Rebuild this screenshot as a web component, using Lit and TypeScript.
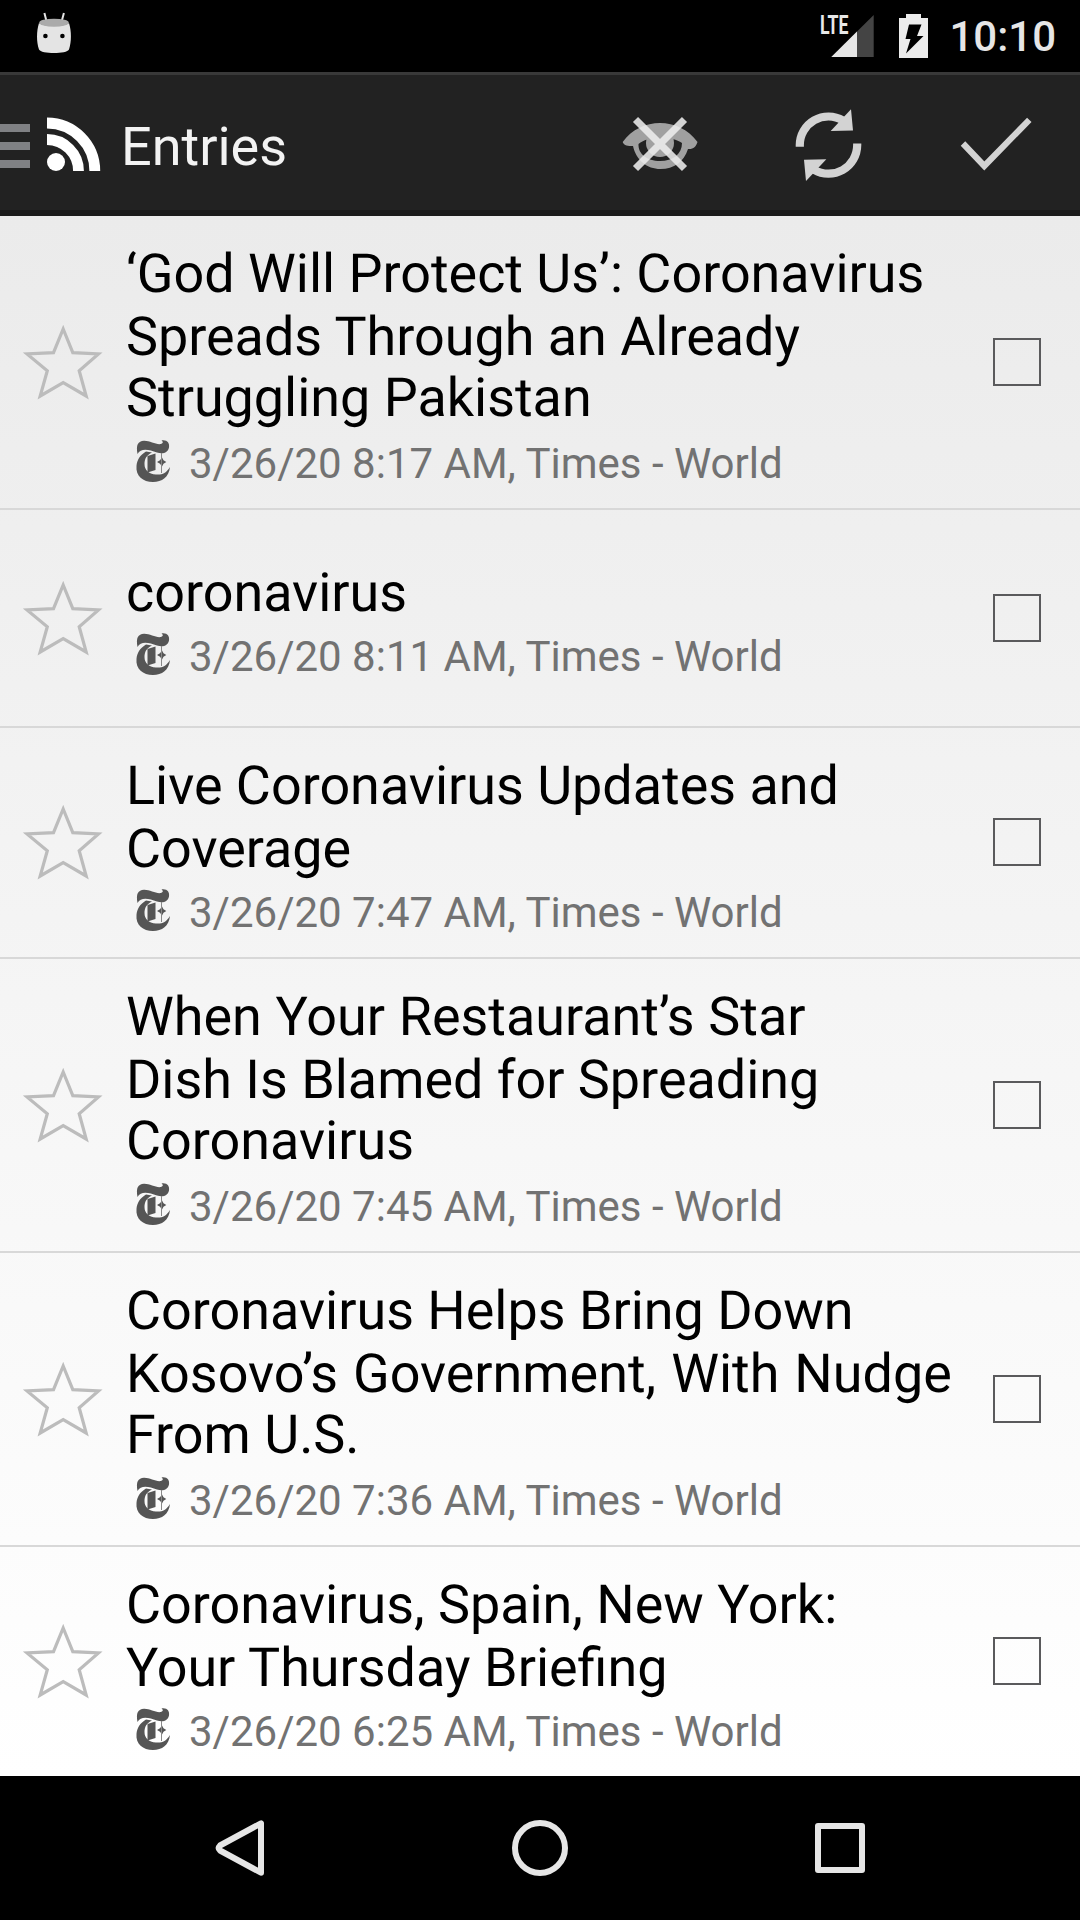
import { LitElement, html, css, svg } from "lit";
import { customElement, property } from "lit/decorators.js";
import { styleMap } from "lit/directives/style-map.js";

interface Line { text: string; gap?: number; }
interface Entry { lines: Line[]; time: string; }

const ENTRIES: Entry[] = [
  { lines: [{ text: "‘God Will Protect Us’: Coronavirus" }, { text: "Spreads Through an Already" }, { text: "Struggling Pakistan" }], time: "3/26/20 8:17 AM" },
  { lines: [{ text: "coronavirus" }], time: "3/26/20 8:11 AM" },
  { lines: [{ text: "Live Coronavirus Updates and" }, { text: "Coverage" }], time: "3/26/20 7:47 AM" },
  { lines: [{ text: "When Your Restaurant’s Star", gap: 0.4 }, { text: "Dish Is Blamed for Spreading" }, { text: "Coronavirus" }], time: "3/26/20 7:45 AM" },
  { lines: [{ text: "Coronavirus Helps Bring Down" }, { text: "Kosovo’s Government, With Nudge", gap: 1.6 }, { text: "From U.S." }], time: "3/26/20 7:36 AM" },
  { lines: [{ text: "Coronavirus, Spain, New York:" }, { text: "Your Thursday Briefing", gap: 0.3 }], time: "3/26/20 6:25 AM" },
];

@customElement("status-bar")
class StatusBar extends LitElement {
  static styles = css`
    :host { display: flex; height: 72px; background: #000; justify-content: space-between; flex: none; }
    svg { display: block; }
    .right { display: flex; }
    .clock { font: 500 42px/72px Roboto, sans-serif; color: #e6e6e6; padding: 1px 24px 0 0; height: 71px; white-space: pre; }
    .lte { font: 700 26px Roboto, sans-serif; }
  `;
  render() {
    return html`
      <svg width="110" height="72" viewBox="0 0 110 72">
        <path d="M44.4 13l2.3 9M63.9 13l-2.4 9" stroke="#e4e4e4" stroke-width="2" />
        <path d="M39 23c5 4 25 4 30 0 2.600 8 2.600 19 0 26.500-2 4.800-28 4.800-30 0-2.600-7.500-2.600-18.500 0-26.500z" fill="#e4e4e4" />
        <ellipse cx="54" cy="22.700" rx="14.800" ry="4" fill="#aaa" />
        <circle cx="45.400" cy="36" r="2.300" /><circle cx="62.400" cy="36" r="2.300" />
      </svg>
      <div class="right">
        <svg width="131" height="72" viewBox="818 0 131 72">
          <text class="lte" x="820" y="33.500" textLength="28.500" lengthAdjust="spacingAndGlyphs" fill="#e8e8e8">LTE</text>
          <path d="M873.700 15v42h-42.400z" fill="#444" />
          <path d="M857 31.500V57h-25.700z" fill="#e6e6e6" />
          <path fill-rule="evenodd" fill="#ececec" d="M906 14h15v4h7v40h-29V18h7zM909 24.500L905.500 39h5L906 53.500 923.500 36H917l4.500-11.500z" />
        </svg>
        <span class="clock">10:10</span>
      </div>`;
  }
}

@customElement("action-bar")
class ActionBar extends LitElement {
  static styles = css`
    :host { display: flex; height: 144px; box-sizing: border-box; background: #222; flex: none;
      border-top: 3px solid #393939; border-bottom: 6px solid #1b1b1b; }
    svg { display: block; flex: none; }
    .title { flex: 1; font: 400 54px/135px Roboto, sans-serif; color: #f3f3f3; padding: 4px 0 0 1px; height: 131px; }
  `;
  render() {
    const arrow = svg`
      <path d="M799.800 146.700V145.100A28.600 28.600 0 0 1 843 120.500" fill="none" stroke="#d3d3d3" stroke-width="8.200" />
      <path d="M851 109.300L853 130.500 830.700 130.900z" fill="#d3d3d3" />`;
    return html`
      <svg width="120" height="135" viewBox="0 75 120 135">
        <path d="M0 124h30v8H0zM0 142h30v8H0zM0 160h30v8H0z" fill="#808184" />
        <circle cx="56" cy="162" r="9" fill="#fff" />
        <path d="M47 139.500A31.500 31.500 0 0 1 78.500 171M47 123A48 48 0 0 1 94.800 171" fill="none" stroke="#fff" stroke-width="10.800" />
      </svg>
      <span class="title">Entries</span>
      <svg width="168" height="135" viewBox="576 75 168 135">
        <path fill="#a0a0a0" fill-rule="evenodd" d="M622.700 142C632 129 646 123 660 123S688 129 697.500 142C696 147 693 149.500 688 149 684 162 674 169 660.500 169S636 160 633 146C628 146 624 146 622.700 142zM638.500 144C638 154 647 161 660 161S682 154 682 143C672 136 648 136 638.500 144z" />
        <circle cx="660" cy="143" r="14" fill="#a0a0a0" />
        <path d="M635.500 119.500L684.500 168.500M684.500 119.500L635.500 168.500" stroke="#ececec" stroke-opacity=".88" stroke-width="7.200" />
      </svg>
      <svg width="168" height="135" viewBox="744 75 168 135">
        ${arrow}<g transform="rotate(180 828.500 145.100)">${arrow}</g>
      </svg>
      <svg width="168" height="135" viewBox="912 75 168 135">
        <path d="M963 143.500L984.300 166 1029.300 119.800" fill="none" stroke="#d3d3d3" stroke-width="6.200" />
      </svg>`;
  }
}

@customElement("entry-row")
class EntryRow extends LitElement {
  @property({ attribute: false }) entry!: Entry;
  static styles = css`
    :host { display: flex; align-items: center; box-sizing: content-box; min-height: 216px; border-bottom: 2px solid #d8d8d8; }
    :host(:last-child) { border-bottom: none; }
    svg { display: block; flex: none; }
    .star { width: 126px; height: 84px; margin-top: -1px; }
    .body { flex: 1; padding: 27px 0 13px; }
    .line { font: 400 53.9px/63px Roboto, sans-serif; height: 63px; color: #000; white-space: pre; text-rendering: geometricPrecision; }
    .line:nth-child(3) { margin: -2px 0 2px; }
    .meta { display: flex; align-items: center; height: 63px; }
    .label { font: 400 42px/63px Roboto, sans-serif; color: #727272; white-space: pre; }
    .box { width: 44px; height: 44px; border: 2px solid #5a5a5c; margin: -1px 39px 0 0; flex: none; }
  `;
  render() {
    return html`
      <svg class="star" viewBox="0 320 126 84">
        <path d="M63.200 329L72.800 352.600 98.500 354 79.200 370.800 86.200 396 63.200 382.500 40.200 396 47.300 370.800 27 354 53.500 352.600z" fill="none" stroke="#bcbcbc" stroke-width="3.200" />
      </svg>
      <div class="body">
        ${this.entry.lines.map((l) => html`<div class="line" style=${styleMap({ wordSpacing: `${l.gap ?? 0}px` })}>${l.text}</div>`)}
        <div class="meta">
          <svg width="63" height="63" viewBox="126 432 63 63">
            <path fill="#555" d="M137.500 454C135.800 445 138 441 144 440.800 150 440.600 157 445.500 161.500 443.800 163.500 443 163 441.500 161.500 440.500 167 439.500 169.800 443 169 447.500 168 452.500 163 454.500 157 452.500 149 449.500 141 447.500 137.500 454z" />
            <path fill="#555" d="M146 451.500C140 455 137 460 136.500 466 135.500 476 143 482 153 482 162 482 169 477 170 467 166 473.500 162 475 156 474.500 148.500 474 144.500 470 144.500 464 144.500 459 146.500 455 152 452.500z" />
            <path fill="#555" d="M147.500 456L155.500 453.500V470L147.500 472.500zM162 457.500L163.500 460.200 166.300 462 163.500 463.700 162 466.500 160 463.700 157 462 160 460.200z" />
            <path d="M161.500 453V473" stroke="#888" stroke-width="1" />
          </svg>
          <span class="label">${this.entry.time}, Times - World</span>
        </div>
      </div>
      <div class="box"></div>`;
  }
}

@customElement("app-root")
class AppRoot extends LitElement {
  static styles = css`
    :host { display: flex; flex-direction: column; width: 1080px; height: 1920px; overflow: hidden; }
    .list { flex: 1; min-height: 0; overflow: hidden; background: linear-gradient(#ebebeb, #fff); }
    .nav { flex: none; height: 144px; background: #000; display: flex; justify-content: center; }
    svg { display: block; }
  `;
  render() {
    return html`
      <status-bar></status-bar>
      <action-bar></action-bar>
      <div class="list">${ENTRIES.map((e) => html`<entry-row .entry=${e}></entry-row>`)}</div>
      <div class="nav">
        <svg width="1080" height="144" viewBox="0 1776 1080 144" fill="none" stroke="#e6e6e6" stroke-width="6" stroke-linejoin="round">
          <path d="M261 1823.300V1872.700L220 1850.500Q217.500 1848 220 1845.500z" />
          <circle cx="540" cy="1848" r="25" />
          <rect x="818" y="1826" width="44" height="44" />
        </svg>
      </div>`;
  }
}
